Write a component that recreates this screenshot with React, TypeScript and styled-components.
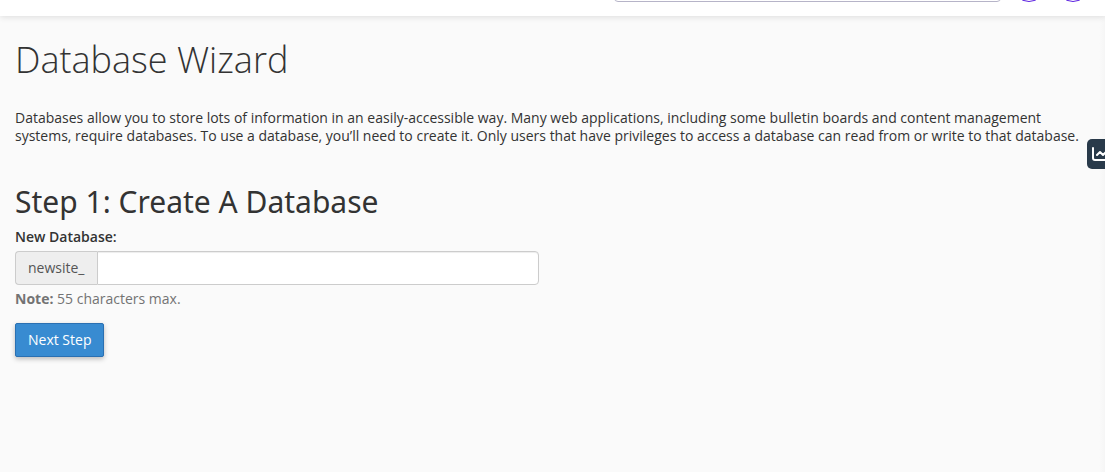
import React, { useState } from "react";
import styled, { createGlobalStyle } from "styled-components";

const GlobalStyle = createGlobalStyle`
  *, *::before, *::after { box-sizing: border-box; }
  html { background: #fafafa; }
  body {
    margin: 0;
    font-family: "Open Sans", "Noto Sans", sans-serif;
    font-size: 14px;
    line-height: 18px;
    color: #333;
  }
`;

const Page = styled.div`
  position: relative;
  min-height: 100vh;
  background: #fafafa;
  overflow: hidden;
`;

const TopBar = styled.header`
  position: relative;
  z-index: 1;
  padding: 0 16px 14px 0;
  background: #fff;
  box-shadow: 0 1px 6px rgba(0, 0, 0, 0.12);
`;

const TopBarTools = styled.div`
  display: flex;
  justify-content: flex-end;
  align-items: flex-end;
  gap: 12px;
  height: 2px;
  overflow: hidden;
`;

const SearchInput = styled.input`
  flex: 0 0 auto;
  width: 387px;
  height: 36px;
  border: 1px solid #b6b4c8;
  border-radius: 4px;
  background: #fff;
  outline: none;
`;

const RoundButton = styled.button`
  flex: 0 0 auto;
  width: 32px;
  height: 32px;
  padding: 0;
  border: 1px solid #5a1fe0;
  border-radius: 50%;
  background: #fff;
`;

const Content = styled.main`
  padding: 22px 15px;
`;

const PageTitle = styled.h1`
  margin: 0 0 27px;
  font-size: 36px;
  font-weight: 300;
  line-height: 44px;
`;

const Description = styled.p`
  margin: 0 0 40px;
`;

const StepTitle = styled.h2`
  margin: 0 0 9px;
  font-family: "Noto Sans", "Open Sans", sans-serif;
  font-size: 30px;
  font-weight: 400;
  line-height: 34px;
`;

const Label = styled.label`
  display: block;
  margin-bottom: 5px;
  font-weight: 600;
`;

const InputGroup = styled.div`
  display: flex;
  width: 100%;
  max-width: 524px;
  height: 34px;
`;

const Prefix = styled.span`
  display: flex;
  align-items: center;
  padding: 0 12px;
  border: 1px solid #ccc;
  border-right: 0;
  border-radius: 4px 0 0 4px;
  background: #eee;
  color: #555;
`;

const TextInput = styled.input`
  flex: 1;
  min-width: 0;
  padding: 6px 12px;
  border: 1px solid #ccc;
  border-radius: 0 4px 4px 0;
  background: #fff;
  box-shadow: inset 0 1px 1px rgba(0, 0, 0, 0.075);
  color: #555;
  font: inherit;
  outline: none;
`;

const Note = styled.p`
  margin: 5px 0 15px;
  color: #737373;
`;

const PrimaryButton = styled.button`
  height: 34px;
  padding: 0 12px;
  border: 1px solid #2a70b2;
  border-radius: 2px;
  background: #388bd1;
  box-shadow: 0 2px 5px rgba(0, 0, 0, 0.26);
  color: #fff;
  font: inherit;
  font-weight: 500;
  cursor: pointer;
`;

const EdgeShade = styled.div`
  position: absolute;
  top: 0;
  right: 0;
  bottom: 0;
  width: 6px;
  background: linear-gradient(to right, #fafafa, #f6f6f6);
`;

const StatsTab = styled.button`
  position: absolute;
  top: 139px;
  right: 0;
  display: flex;
  align-items: center;
  width: 18px;
  height: 30px;
  padding: 0 0 0 4px;
  border: 0;
  border-radius: 5px 0 0 5px;
  background: #293a4a;
  overflow: hidden;

  svg {
    flex: none;
  }
`;

export default function App() {
  const [name, setName] = useState("");
  return (
    <Page>
      <GlobalStyle />
      <TopBar>
        <TopBarTools>
          <SearchInput type="search" aria-label="Search" />
          <RoundButton type="button" aria-label="Notifications" />
          <RoundButton type="button" aria-label="Account" />
        </TopBarTools>
      </TopBar>
      <EdgeShade />
      <Content>
        <PageTitle>Database Wizard</PageTitle>
        <Description>
          Databases allow you to store lots of information in an easily-accessible way. Many web
          applications, including some bulletin boards and content management systems, require
          databases. To use a database, you’ll need to create it. Only users that have privileges to
          access a database can read from or write to that database.
        </Description>
        <form onSubmit={(e) => e.preventDefault()}>
          <StepTitle>Step 1: Create A Database</StepTitle>
          <Label htmlFor="database-name">New Database:</Label>
          <InputGroup>
            <Prefix>newsite_</Prefix>
            <TextInput
              id="database-name"
              type="text"
              maxLength={55}
              value={name}
              onChange={(e) => setName(e.target.value)}
            />
          </InputGroup>
          <Note>
            <strong>Note:</strong> 55 characters max.
          </Note>
          <PrimaryButton type="submit">Next Step</PrimaryButton>
        </form>
      </Content>
      <StatsTab type="button" aria-label="Statistics">
        <svg width="20" height="16" viewBox="0 0 20 16" fill="none" stroke="#fff">
          <path d="M2 2v10q0 2 2 2h15" strokeWidth="2" strokeLinecap="round" />
          <path d="M6 9l3-3 3 3 5-5" strokeWidth="2" strokeLinejoin="round" strokeLinecap="round" />
        </svg>
      </StatsTab>
    </Page>
  );
}
